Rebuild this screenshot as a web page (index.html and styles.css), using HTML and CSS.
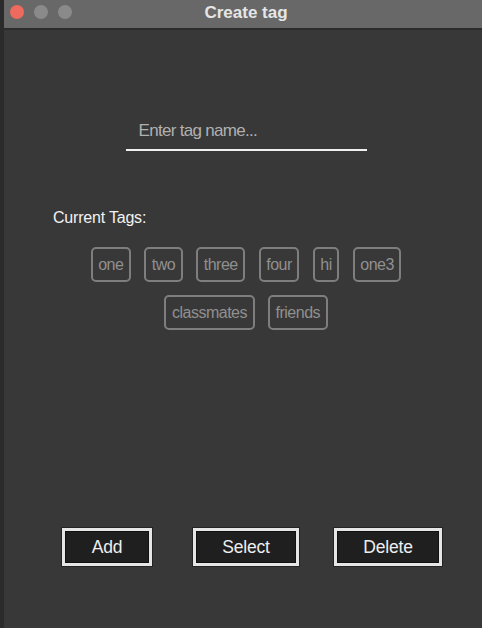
FILE: index.html
```html
<!DOCTYPE html>
<html>
<head>
<meta charset="utf-8">
<link rel="stylesheet" href="styles.css">
</head>
<body>
<div class="window">
  <div class="titlebar">
    <div class="lights">
      <span class="light red"></span>
      <span class="light grey"></span>
      <span class="light grey"></span>
    </div>
    <div class="title">Create tag</div>
  </div>
  <div class="content">
    <div class="input-wrap">
      <input class="tag-input" type="text" placeholder="Enter tag name...">
    </div>
    <div class="label">Current Tags:</div>
    <div class="tags">
      <span class="tag">one</span>
      <span class="tag">two</span>
      <span class="tag">three</span>
      <span class="tag">four</span>
      <span class="tag">hi</span>
      <span class="tag">one3</span>
      <span class="tag">classmates</span>
      <span class="tag">friends</span>
    </div>
    <div class="spacer"></div>
    <div class="buttons">
      <button class="btn btn-add">Add</button>
      <button class="btn btn-select">Select</button>
      <button class="btn btn-delete">Delete</button>
    </div>
  </div>
</div>
</body>
</html>
```
FILE: styles.css
```css
html, body {
  margin: 0;
  padding: 0;
  height: 100%;
  background: #383838;
  font-family: "Liberation Sans", Arial, sans-serif;
}
.window {
  height: 100%;
  display: flex;
  flex-direction: column;
  border-left: 4px solid #2b2b2b;
  box-sizing: border-box;
  background: #383838;
}
.titlebar {
  height: 28px;
  flex: none;
  background: #686868;
  border-bottom: 2px solid #2c2c2c;
  position: relative;
  display: flex;
  align-items: center;
  justify-content: center;
}
.lights {
  position: absolute;
  left: 6px;
  top: 5px;
  display: flex;
  gap: 10px;
}
.light {
  width: 14px;
  height: 14px;
  border-radius: 50%;
  display: block;
}
.red { background: #ee6a5e; }
.grey { background: #8a8a8a; }
.title {
  color: #e6e6e6;
  font-weight: bold;
  font-size: 17px;
  margin-left: 6px;
  margin-top: -2px;
}
.content {
  flex: 1;
  display: flex;
  flex-direction: column;
  padding-left: 6px;
}
.input-wrap {
  display: flex;
  justify-content: center;
  margin-top: 91px;
}
.tag-input {
  width: 241px;
  height: 30px;
  box-sizing: border-box;
  background: transparent;
  border: none;
  border-bottom: 2px solid #f0f0f0;
  outline: none;
  padding: 0 0 8px 13px;
  font-family: "Liberation Sans", Arial, sans-serif;
  font-size: 17px;
  letter-spacing: -0.7px;
  color: #b0b0b0;
}
.tag-input::placeholder {
  color: #b0b0b0;
  opacity: 1;
}
.label {
  margin-top: 58px;
  margin-left: 43px;
  color: #f2f2f2;
  font-size: 16px;
  letter-spacing: -0.2px;
  line-height: 18px;
}
.tags {
  margin: 20px auto 0;
  width: 330px;
  display: flex;
  flex-wrap: wrap;
  justify-content: center;
  column-gap: 13.5px;
  row-gap: 13px;
}
.tag {
  height: 35px;
  box-sizing: border-box;
  border: 2px solid #7e7e7e;
  border-radius: 5px;
  padding: 0 5.5px;
  line-height: 31px;
  font-size: 16px;
  letter-spacing: -0.5px;
  color: #909090;
}
.spacer { flex: 1; }
.buttons {
  display: flex;
  margin-bottom: 62px;
  padding-left: 52px;
}
.btn {
  height: 38px;
  box-sizing: border-box;
  background: #1f1f1f;
  border: 3px solid #e6e6e6;
  box-shadow: 0 0 0 1px #242424, inset 0 0 0 1px #111;
  color: #eeeeee;
  font-family: "Liberation Sans", Arial, sans-serif;
  font-size: 17.5px;
  letter-spacing: -0.2px;
  padding: 0;
  border-radius: 0;
}
.btn-add { width: 90px; }
.btn-select { width: 106px; margin-left: 41px; }
.btn-delete { width: 108px; margin-left: 35px; }
```
